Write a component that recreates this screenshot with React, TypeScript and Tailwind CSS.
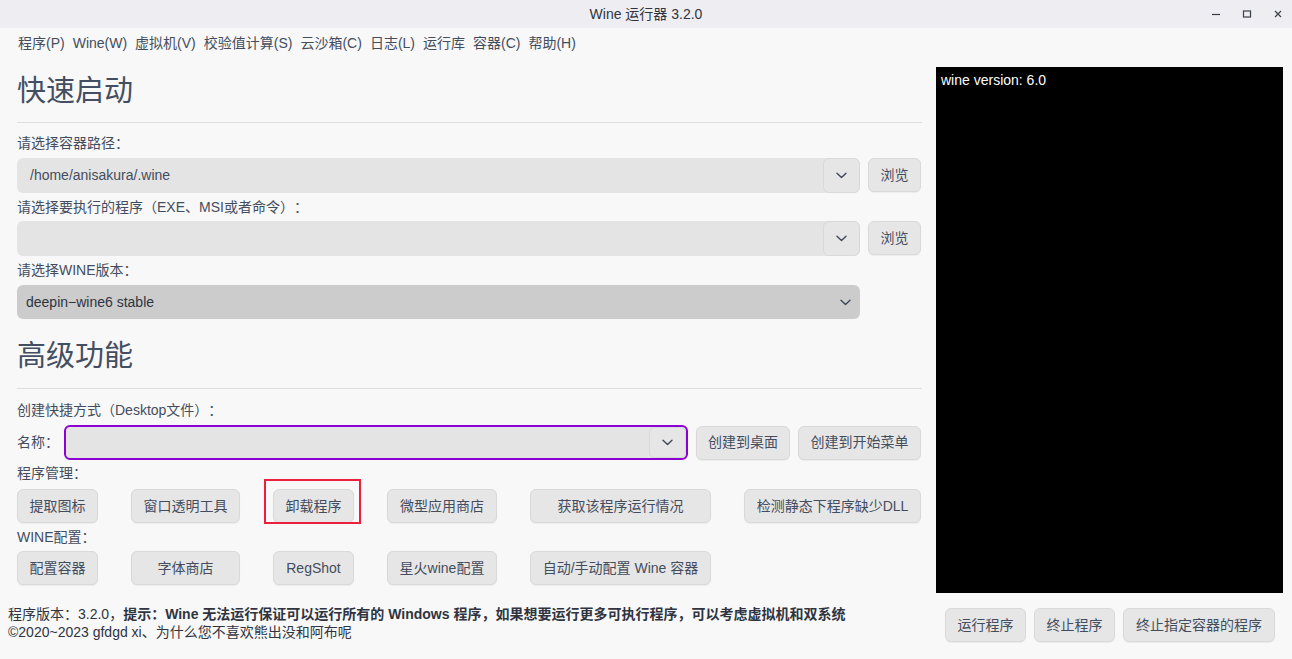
import type { ReactNode } from "react";

const menus = ["程序(P)", "Wine(W)", "虚拟机(V)", "校验值计算(S)", "云沙箱(C)", "日志(L)", "运行库", "容器(C)", "帮助(H)"];

function Chevron() {
  return (
    <svg width="11" height="7" viewBox="0 0 11 7" fill="none">
      <path d="M1 1.2 L5.5 5.5 L10 1.2" stroke="#3f4859" strokeWidth="1.4" strokeLinecap="round" strokeLinejoin="round" />
    </svg>
  );
}

function Btn({ children, className = "" }: { children: ReactNode; className?: string }) {
  return (
    <button
      className={`flex h-[34px] items-center justify-center rounded-[6px] border border-[#d9d9d9] bg-[#e6e6e6] text-[14px] text-[#444d5e] shadow-[0_1px_1px_rgba(0,0,0,0.05)] ${className}`}
    >
      {children}
    </button>
  );
}

function Combo({ value = "", className = "", focused = false }: { value?: string; className?: string; focused?: boolean }) {
  return (
    <div
      className={`flex h-[35px] items-center rounded-[6px] bg-[#e4e4e4] ${focused ? "border-2 border-[#8c00d4]" : ""} ${className}`}
    >
      <span className="flex-1 pl-[13px] text-[14px] text-[#444d5e]">{value}</span>
      <div className="flex h-full w-[37px] items-center justify-center rounded-[6px] border border-[#d9d9d9] bg-[#e6e6e6]">
        <Chevron />
      </div>
    </div>
  );
}

function Label({ children, className = "" }: { children: ReactNode; className?: string }) {
  return <div className={`flex h-[20px] items-center text-[14px] text-[#444d5e] ${className}`}>{children}</div>;
}

export default function App() {
  return (
    <div className="flex h-[659px] w-[1292px] flex-col overflow-hidden bg-[#f8f8f8] font-['Liberation_Sans','Noto_Sans_CJK_SC',sans-serif] text-[#444d5e] [text-spacing-trim:space-all]">
      {/* title bar */}
      <div className="relative flex h-[28px] shrink-0 items-center justify-center bg-[#eeeef2] text-[14px] text-[#2f3440]">
        Wine 运行器 3.2.0
        <div className="absolute right-[9px] top-0 flex h-full items-center gap-[21px]">
          <svg width="10" height="10" viewBox="0 0 10 10">
            <path d="M1 5.5 H9" stroke="#3a3f4a" strokeWidth="1.2" />
          </svg>
          <svg width="10" height="10" viewBox="0 0 10 10">
            <rect x="1.5" y="2" width="7" height="6" fill="none" stroke="#3a3f4a" strokeWidth="1.2" />
          </svg>
          <svg width="10" height="10" viewBox="0 0 10 10">
            <path d="M2 2 L8 8 M8 2 L2 8" stroke="#3a3f4a" strokeWidth="1.2" />
          </svg>
        </div>
      </div>

      {/* menu bar */}
      <div className="flex h-[30px] shrink-0 items-center pl-[14px] text-[14px]">
        {menus.map((m) => (
          <span key={m} className="px-[4px]">
            {m}
          </span>
        ))}
      </div>

      {/* main */}
      <div className="mt-[9px] flex h-[526px] shrink-0 pl-[17px]">
        <div className="flex w-[905px] flex-col">
          <div className="flex h-[50px] items-center text-[29px] text-[#444e62]">快速启动</div>
          <div className="mt-[5px] h-px bg-[#dedede]" />
          <Label className="mt-[10px]">请选择容器路径：</Label>
          <div className="mt-[5px] flex gap-[8px]">
            <Combo value="/home/anisakura/.wine" className="w-[843px]" />
            <Btn className="h-[34px] w-[53px]">浏览</Btn>
          </div>
          <Label className="mt-[4px]">请选择要执行的程序（EXE、MSI或者命令）：</Label>
          <div className="mt-[4px] flex gap-[8px]">
            <Combo className="w-[843px]" />
            <Btn className="h-[34px] w-[53px]">浏览</Btn>
          </div>
          <Label className="mt-[4px]">请选择WINE版本：</Label>
          <div className="mt-[5px] flex h-[34px] w-[843px] items-center justify-between rounded-[6px] bg-[#cccccc] pl-[9px] pr-[9px] text-[14px] text-[#2f3440]">
            <span>deepin−wine6 stable</span>
            <Chevron />
          </div>
          <div className="mt-[13px] flex h-[50px] items-center text-[29px] text-[#444e62]">高级功能</div>
          <div className="mt-[6px] h-px bg-[#dedede]" />
          <Label className="mt-[11px]">创建快捷方式（Desktop文件）：</Label>
          <div className="mt-[5px] flex items-center">
            <span className="w-[47px] text-[14px]">名称：</span>
            <Combo focused className="h-[34px] w-[624px]" />
            <Btn className="ml-[8px] w-[94px]">创建到桌面</Btn>
            <Btn className="ml-[8px] w-[123px]">创建到开始菜单</Btn>
          </div>
          <Label className="mt-[3px]">程序管理：</Label>
          <div className="mt-[6px] grid grid-cols-[81px_109px_81px_110px_181px_177px] gap-x-[33px]">
            <Btn>提取图标</Btn>
            <Btn>窗口透明工具</Btn>
            <div className="relative">
              <Btn className="w-full">卸载程序</Btn>
              <div className="pointer-events-none absolute bottom-[-1px] left-[-9px] right-[-7px] top-[-10px] border-2 border-[#ec1f3c]" />
            </div>
            <Btn>微型应用商店</Btn>
            <Btn>获取该程序运行情况</Btn>
            <Btn>检测静态下程序缺少DLL</Btn>
          </div>
          <Label className="mt-[4px]">WINE配置：</Label>
          <div className="mt-[4px] grid grid-cols-[81px_109px_81px_110px_181px_177px] gap-x-[33px]">
            <Btn>配置容器</Btn>
            <Btn>字体商店</Btn>
            <Btn>RegShot</Btn>
            <Btn>星火wine配置</Btn>
            <Btn>自动/手动配置 Wine 容器</Btn>
          </div>
        </div>
        <div className="ml-[14px] h-full w-[347px] bg-black px-[5px] pt-[4px] text-[14px] leading-[18px] text-white">
          wine version: 6.0
        </div>
      </div>

      {/* footer */}
      <div className="flex flex-1 items-start justify-between">
        <div className="pl-[8px] pt-[12px] text-[14px] leading-[18px] text-[#2f3440]">
          <div>
            程序版本：3.2.0，
            <b>提示：Wine 无法运行保证可以运行所有的 Windows 程序，如果想要运行更多可执行程序，可以考虑虚拟机和双系统</b>
          </div>
          <div>©2020~2023 gfdgd xi、为什么您不喜欢熊出没和阿布呢</div>
        </div>
        <div className="flex gap-[8px] pr-[17px] pt-[15px]">
          <Btn className="w-[81px]">运行程序</Btn>
          <Btn className="w-[81px]">终止程序</Btn>
          <Btn className="w-[152px]">终止指定容器的程序</Btn>
        </div>
      </div>
    </div>
  );
}
